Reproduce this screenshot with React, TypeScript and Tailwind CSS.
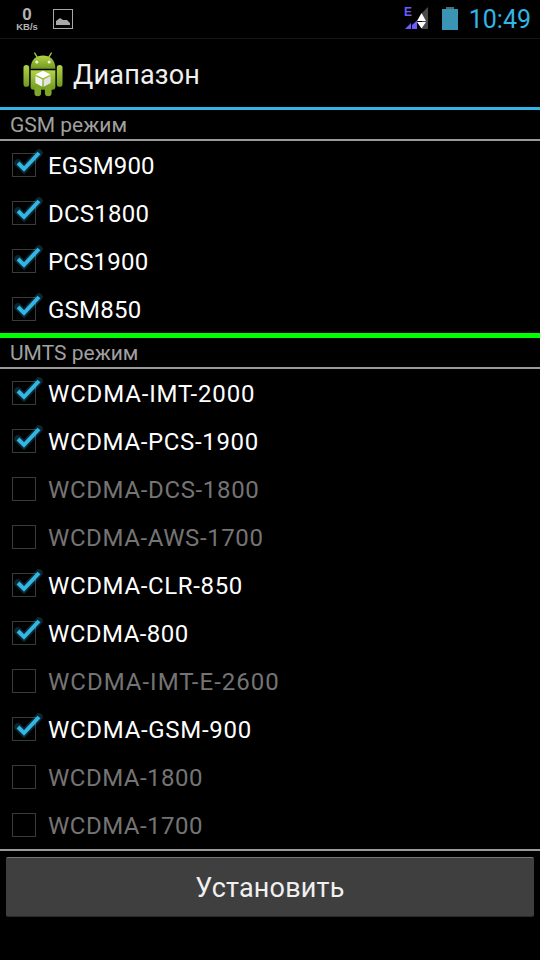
import React from "react";

const gsm = [
  { t: "EGSM900", c: true, k: "tracking-[0.15px]" },
  { t: "DCS1800", c: true, k: "tracking-[0.25px]" },
  { t: "PCS1900", c: true, k: "tracking-[0.2px]" },
  { t: "GSM850", c: true, k: "tracking-[0.25px]" },
];
const umts = [
  { t: "WCDMA-IMT-2000", c: true, k: "tracking-[0.85px]" },
  { t: "WCDMA-PCS-1900", c: true, k: "tracking-[0.65px]" },
  { t: "WCDMA-DCS-1800", c: false, k: "tracking-[0.65px]" },
  { t: "WCDMA-AWS-1700", c: false, k: "tracking-[0.6px]" },
  { t: "WCDMA-CLR-850", c: true, k: "tracking-[0.65px]" },
  { t: "WCDMA-800", c: true, k: "tracking-[0.45px]" },
  { t: "WCDMA-IMT-E-2600", c: false, k: "tracking-[1px]" },
  { t: "WCDMA-GSM-900", c: true, k: "tracking-[0.7px]" },
  { t: "WCDMA-1800", c: false, k: "tracking-[0.5px]" },
  { t: "WCDMA-1700", c: false, k: "tracking-[0.5px]" },
];

function Row({ t, c, k }: { t: string; c: boolean; k: string }) {
  return (
    <div className="flex h-[48px] items-center pl-[12px]">
      <div className="relative h-[24px] w-[24px] shrink-0 border border-[#3a3a3a]">
        {c && (
          <svg className="absolute left-[-1px] top-[-9px] overflow-visible" width="30" height="30" viewBox="0 0 30 30">
            <path d="M6 18 L12 24 L27 8" fill="none" stroke="#33b5e5" strokeOpacity="0.22" strokeWidth="7.5" strokeLinecap="round" />
            <path d="M6 18 L12 24 L27 8" fill="none" stroke="#33b5e5" strokeWidth="4" />
          </svg>
        )}
      </div>
      <span className={`ml-[12px] pt-[2px] text-[24px] leading-none ${k} ${c ? "text-white" : "text-[#747474]"}`}>{t}</span>
    </div>
  );
}

function Section({ title }: { title: string }) {
  return (
    <div className="flex h-[31px] flex-col">
      <div className="flex h-[29px] items-center pl-[10px] pt-[2px] text-[21px] leading-none text-[#a0a0a0]">{title}</div>
      <div className="h-[2px] bg-[#9a9a9a]" />
    </div>
  );
}

function Robot() {
  return (
    <svg width="40" height="47" viewBox="0 0 42 48">
      <defs>
        <linearGradient id="g" x1="0" y1="0" x2="0" y2="1">
          <stop offset="0" stopColor="#b4d24a" />
          <stop offset="1" stopColor="#6f9a1e" />
        </linearGradient>
      </defs>
      <path d="M12 2 L15 7 M30 2 L27 7" stroke="#a5c840" strokeWidth="1.4" />
      <path d="M8 19 C8 9 14 5 21 5 C28 5 34 9 34 19 Z" fill="url(#g)" />
      <circle cx="14.5" cy="12" r="1.6" fill="#f2f6d8" />
      <circle cx="27.5" cy="12" r="1.6" fill="#f2f6d8" />
      <path d="M8 20.5 H34 V38 Q34 41 31 41 H11 Q8 41 8 38 Z" fill="url(#g)" />
      <rect x="0.5" y="15" width="6" height="23" rx="3" fill="url(#g)" />
      <rect x="35.5" y="15" width="6" height="23" rx="3" fill="url(#g)" />
      <rect x="12" y="38" width="7" height="10" rx="3.5" fill="#7fa628" />
      <rect x="23" y="38" width="7" height="10" rx="3.5" fill="#7fa628" />
      <path d="M21 21 L29 25 L21 29 L13 25 Z" fill="#ffffff" />
      <path d="M13 26.5 L20.3 30.2 V38 L13 34 Z" fill="#f3f3f3" />
      <path d="M29 26.5 L21.7 30.2 V38 L29 34 Z" fill="#e2e2e2" />
    </svg>
  );
}

function StatusBar() {
  return (
    <div className="flex h-[39px] items-start justify-between border-b border-[#161616]">
      <div className="flex items-start">
        <div className="ml-[14px] flex w-[26px] flex-col items-center pt-[7px] text-[#b4b4b4] [font-family:'Liberation_Sans',sans-serif]">
          <span className="text-[17px] font-bold leading-[15px]">0</span>
          <span className="text-[9.5px] font-bold leading-[10px]">KB/s</span>
        </div>
        <svg className="ml-[13px] mt-[9px]" width="20" height="20" viewBox="0 0 20 20">
          <rect x="0.5" y="0.5" width="19" height="19" fill="#000" stroke="#a8a8a8" />
          <path d="M3 16 V12 L7 9 L10 11 L14 11 L17 14 V16 Z" fill="#a8a8a8" />
        </svg>
      </div>
      <div className="flex items-start">
        <svg width="26" height="26" viewBox="0 0 26 26" className="mt-[5px]">
          <text x="2" y="11" fontSize="12" fontWeight="700" fill="#6a5cff" fontFamily="Liberation Sans, sans-serif">E</text>
          <path d="M3 24 H9 V18 Z" fill="#6a5cff" />
          <path d="M10 24 H15 V15.5 L10 20 Z" fill="#6a5cff" />
          <path d="M20 24 H26 V2 L20 8 Z" fill="#4a4a4a" />
          <path d="M19.5 8 L24 16 H15 Z" fill="#ffffff" />
          <path d="M19.5 23.5 L24 17 H15 Z" fill="#ffffff" />
        </svg>
        <svg width="16" height="23" viewBox="0 0 16 23" className="ml-[14px] mt-[7px]">
          <rect x="4" y="0" width="8" height="3" fill="#4a6f7c" />
          <rect x="0" y="2" width="16" height="21" fill="#3a94b4" />
        </svg>
        <span className="ml-[11px] mr-[9px] mt-[6px] text-[25px] leading-[28px] text-[#33b5e5]">10:49</span>
      </div>
    </div>
  );
}

export default function App() {
  return (
    <div className="flex h-[960px] w-[540px] flex-col overflow-hidden bg-black [font-family:Roboto,sans-serif]">
      <StatusBar />
      <div className="flex h-[68px] items-center pl-[23px]">
        <Robot />
        <span className="ml-[10px] pt-[4px] text-[27px] leading-none tracking-[0.2px] text-[#f0f0f0]">Диапазон</span>
      </div>
      <div className="h-[3px] bg-[#33b5e5]" />
      <Section title="GSM режим" />
      {gsm.map((r) => (
        <Row key={r.t} {...r} />
      ))}
      <div className="h-[5px] bg-[#00ff00]" />
      <Section title="UMTS режим" />
      {umts.map((r) => (
        <Row key={r.t} {...r} />
      ))}
      <div className="h-[2px] bg-[#9a9a9a]" />
      <button className="mx-[6px] mt-[6px] h-[60px] rounded-[2px] border-t border-t-[#777] border-b border-b-[#2a2a2a] bg-[#3f3f3f] pt-[2px] text-[27px] leading-none tracking-[0.2px] text-[#f0f0f0]">
        Установить
      </button>
    </div>
  );
}
